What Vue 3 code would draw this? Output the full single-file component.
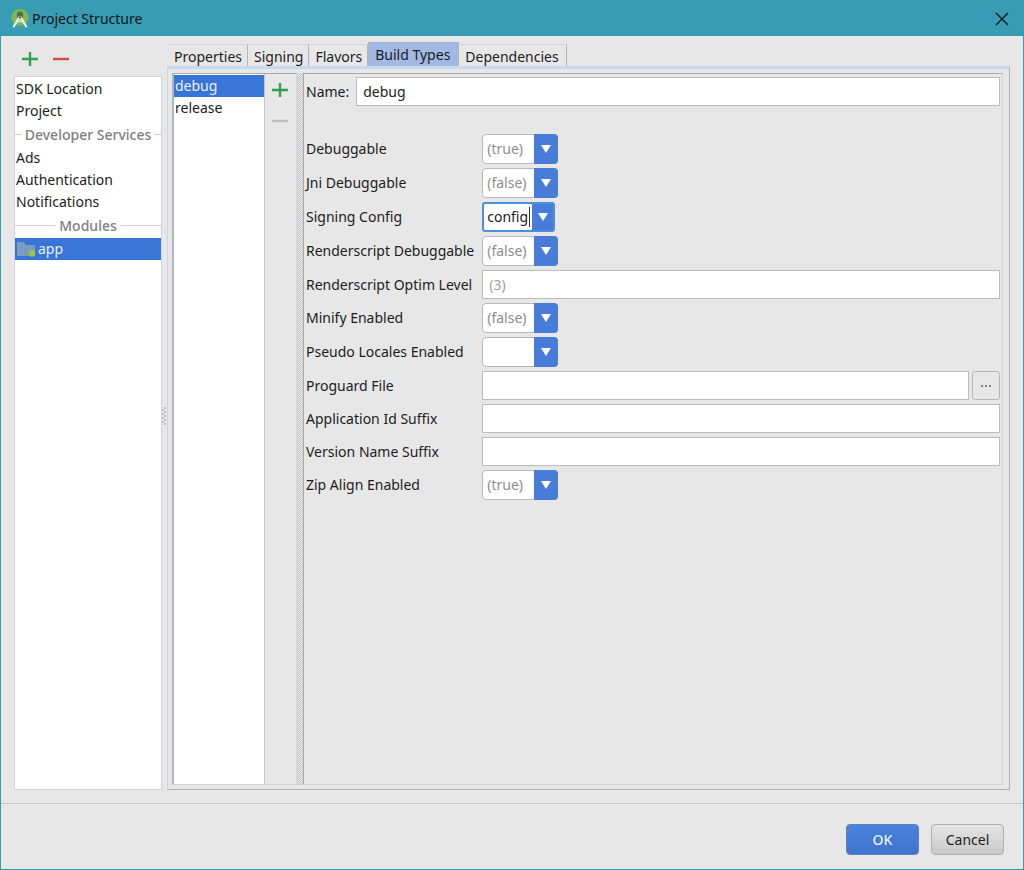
<script setup>
import { ref } from 'vue'

const sections = [
  { kind: 'item', text: 'SDK Location' },
  { kind: 'item', text: 'Project' },
  { kind: 'heading', text: 'Developer Services' },
  { kind: 'item', text: 'Ads' },
  { kind: 'item', text: 'Authentication' },
  { kind: 'item', text: 'Notifications' },
  { kind: 'heading', text: 'Modules' },
  { kind: 'module', text: 'app' },
]
const selectedSection = ref('app')

const tabs = ['Properties', 'Signing', 'Flavors', 'Build Types', 'Dependencies']
const activeTab = ref('Build Types')

const buildTypes = ['debug', 'release']
const selectedType = ref('debug')
const name = ref('debug')

const rows = ref([
  { id: 'debuggable', label: 'Debuggable', kind: 'select', value: '(true)' },
  { id: 'jni', label: 'Jni Debuggable', kind: 'select', value: '(false)' },
  { id: 'signing', label: 'Signing Config', kind: 'combo', value: 'config' },
  { id: 'rs-debug', label: 'Renderscript Debuggable', kind: 'select', value: '(false)' },
  { id: 'rs-optim', label: 'Renderscript Optim Level', kind: 'text', value: '', hint: '(3)' },
  { id: 'minify', label: 'Minify Enabled', kind: 'select', value: '(false)' },
  { id: 'pseudo', label: 'Pseudo Locales Enabled', kind: 'select', value: '' },
  { id: 'proguard', label: 'Proguard File', kind: 'file', value: '' },
  { id: 'app-suffix', label: 'Application Id Suffix', kind: 'text', value: '' },
  { id: 'version-suffix', label: 'Version Name Suffix', kind: 'text', value: '' },
  { id: 'zip', label: 'Zip Align Enabled', kind: 'select', value: '(true)' },
])
</script>

<template>
  <div class="window">
    <header class="titlebar">
      <svg class="logo" viewBox="0 0 18 20" aria-hidden="true">
        <circle cx="9" cy="8.500" r="8.500" fill="#7fb84c" />
        <path d="M9 2.500c-2 0-3.200 1.500-3.200 3.500s1 3.500 3.200 3.500 3.200-1.500 3.200-3.500S11 2.500 9 2.500z" fill="#4f6a50" />
        <path d="M7.500 9.500 2.800 17.500M10.500 9.500l4.700 8" fill="none" stroke="#eef4ee" stroke-width="2" stroke-linecap="round" />
        <path d="M5 13.500q4-2.500 8 0" fill="none" stroke="#dfeadb" stroke-width="1.500" />
        <circle cx="9" cy="9" r="2" fill="#e3ebe2" />
        <circle cx="9" cy="8.500" r="1.200" fill="#566b57" />
      </svg>
      <h1>Project Structure</h1>
      <button class="close" aria-label="Close">
        <svg viewBox="0 0 14 14"><path d="M1 1l12 12M13 1 1 13" stroke="#0b1a1e" stroke-width="1.400" fill="none" /></svg>
      </button>
    </header>

    <main class="content">
      <aside class="side">
        <div class="side-tools">
          <button class="tool" aria-label="Add module">
            <svg viewBox="0 0 16 16"><path d="M8 1v14M0 8h16" stroke="#2fa24f" stroke-width="2.400" /></svg>
          </button>
          <button class="tool" aria-label="Remove module">
            <svg viewBox="0 0 16 16"><path d="M0 8h16" stroke="#cb5044" stroke-width="2.400" /></svg>
          </button>
        </div>
        <ul class="side-list">
          <li v-for="s in sections" :key="s.text">
            <span v-if="s.kind === 'heading'" class="heading">{{ s.text }}</span>
            <button v-else class="item" :class="{ selected: selectedSection === s.text }" @click="selectedSection = s.text">
              <svg v-if="s.kind === 'module'" class="folder" viewBox="0 0 19 16" aria-hidden="true">
                <path d="M0 1h7l2 3h9v11H0z" fill="#7d9abf" />
                <circle cx="15" cy="12.500" r="3.200" fill="#a4c639" />
              </svg>
              {{ s.text }}
            </button>
          </li>
        </ul>
      </aside>

      <div class="grip"><span></span></div>

      <section class="editor">
        <nav class="tabs" role="tablist">
          <button v-for="t in tabs" :key="t" role="tab" class="tab" :class="{ active: activeTab === t }"
            :aria-selected="activeTab === t" @click="activeTab = t">{{ t }}</button>
        </nav>
        <div class="pane">
          <div class="types">
            <ul class="type-list">
              <li v-for="b in buildTypes" :key="b">
                <button class="type" :class="{ selected: selectedType === b }" @click="selectedType = b">{{ b }}</button>
              </li>
            </ul>
            <div class="type-tools">
              <button class="tool" aria-label="Add build type">
                <svg viewBox="0 0 16 16"><path d="M8 1v14M0 8h16" stroke="#2fa24f" stroke-width="2.400" /></svg>
              </button>
              <button class="tool" aria-label="Remove build type" disabled>
                <svg viewBox="0 0 16 16"><path d="M0 8h16" stroke="#bcbcbc" stroke-width="2.400" /></svg>
              </button>
            </div>
          </div>
          <div class="divider"></div>
          <form class="form" @submit.prevent>
            <div class="name-row">
              <label for="name">Name:</label>
              <input id="name" v-model="name" class="text" type="text" />
            </div>
            <div class="rows">
              <template v-for="r in rows" :key="r.id">
                <label :for="r.id">{{ r.label }}</label>
                <div v-if="r.kind === 'select'" class="drop">
                  <select :id="r.id" v-model="r.value">
                    <option value=""></option>
                    <option>(true)</option>
                    <option>(false)</option>
                  </select>
                  <span class="arrow"><svg viewBox="0 0 10 8"><path d="M0 0h10L5 8z" fill="#fff" /></svg></span>
                </div>
                <div v-else-if="r.kind === 'combo'" class="drop focused">
                  <input :id="r.id" v-model="r.value" type="text" role="combobox" aria-expanded="false" />
                  <span class="caret"></span>
                  <button class="arrow" type="button" aria-label="Show signing configs">
                    <svg viewBox="0 0 10 8"><path d="M0 0h10L5 8z" fill="#fff" /></svg>
                  </button>
                </div>
                <div v-else class="field">
                  <input :id="r.id" v-model="r.value" class="text" type="text" :placeholder="r.hint" />
                  <button v-if="r.kind === 'file'" class="browse" type="button" aria-label="Browse">
                    <i></i><i></i><i></i>
                  </button>
                </div>
              </template>
            </div>
          </form>
        </div>
      </section>
    </main>

    <footer class="footer">
      <button class="action primary">OK</button>
      <button class="action">Cancel</button>
    </footer>
  </div>
</template>

<style>
body {
  background: #e7e7e7;
}
</style>

<style scoped>
* {
  box-sizing: border-box;
}
.window {
  display: flex;
  flex-direction: column;
  min-height: 100vh;
  border: 1px solid #389cb4;
  background: #e7e7e7;
  color: #1c1c1c;
  font: 14px/22px "Noto Sans", "Open Sans", sans-serif;
}
button,
input,
select {
  margin: 0;
  padding: 0;
  border: 0;
  border-radius: 0;
  background: none;
  color: inherit;
  font: inherit;
  outline: none;
}
svg {
  display: block;
}
ul {
  margin: 0;
  padding: 0;
  list-style: none;
}
.titlebar {
  display: flex;
  align-items: center;
  height: 35px;
  padding: 0 14px 0 10px;
  background: #389cb4;
  color: #06171b;
}
.logo {
  width: 18px;
  height: 20px;
}
h1 {
  flex: 1;
  margin: 0 0 0 3px;
  font-size: 14px;
  font-weight: 400;
}
.close svg {
  width: 14px;
  height: 14px;
}
.content {
  display: flex;
  flex: 1;
  padding: 6px 13px 13px;
}
.side {
  display: flex;
  flex-direction: column;
  width: 148px;
}
.side-tools {
  display: flex;
  gap: 15px;
  height: 34px;
  padding: 9px 8px;
}
.tool svg {
  width: 16px;
  height: 16px;
}
.side-list {
  flex: 1;
  padding-top: 1px;
  border: 1px solid #d4d4d4;
  background: #fff;
}
.item {
  display: flex;
  align-items: center;
  width: 100%;
  height: 22px;
  padding-left: 1px;
}
.folder {
  width: 19px;
  height: 16px;
  margin: 0 2px 0 1px;
}
.selected {
  background: #3875d7;
  color: #e9f0fb;
}
.heading {
  display: flex;
  align-items: center;
  gap: 3px;
  height: 25px;
  color: #808080;
  font-weight: 500;
}
.heading::before,
.heading::after {
  content: "";
  flex: 1;
  border-top: 1px solid #d0d0d0;
}
.grip {
  display: flex;
  align-items: center;
  width: 5px;
}
.grip span {
  width: 4px;
  height: 18px;
  background: repeating-conic-gradient(#c4c4c4 0 25%, #e7e7e7 0 50%) 0 0 / 4px 4px;
}
.editor {
  display: flex;
  flex: 1;
  flex-direction: column;
  min-width: 0;
}
.tabs {
  display: flex;
  align-items: flex-end;
  height: 24px;
}
.tab {
  height: 22px;
  padding: 1px 5px 0 6px;
  border-top: 1px solid #d6d6d6;
  border-right: 1px solid #b4b4b4;
}
.tab:first-child {
  padding-left: 7px;
}
.tab:last-child {
  padding-right: 7px;
}
.tab.active {
  height: 24px;
  padding: 1px 8px 1px 7px;
  border-top-color: #9db3da;
  background: #a1b9e3;
}
.pane {
  display: flex;
  flex: 1;
  padding: 4px 6px 4px 4px;
  border: 1px solid #b0b0b0;
  border-top: 3px solid #c8daf2;
  border-left-color: #ccd6df;
}
.types {
  display: flex;
  width: 125px;
  border: 1px solid #d4d4d4;
  border-top-color: #a3a9b2;
  border-left: 2px solid #adb4bd;
}
.type-list {
  width: 91px;
  padding-top: 1px;
  border-right: 1px solid #c4c4c4;
  background: #fff;
}
.type {
  display: block;
  width: 100%;
  height: 22px;
  padding-left: 1px;
  text-align: left;
}
.type-tools {
  display: flex;
  flex: 1;
  flex-direction: column;
  align-items: center;
  gap: 15px;
  padding: 8px 1px 0 0;
}
.divider {
  width: 6px;
  background: repeating-conic-gradient(#cacaca 0 25%, #e2e2e2 0 50%) 0 0 / 2px 2px;
}
.form {
  flex: 1;
  min-width: 0;
  padding: 3px 2px;
  border: 1px solid #d4d4d4;
  border-top-color: #a3a9b2;
  border-left-color: #a3a9b2;
}
.name-row {
  display: flex;
  align-items: center;
  gap: 7px;
}
.text {
  flex: 1;
  min-width: 0;
  height: 29px;
  padding: 0 6px;
  border: 1px solid #bcbcbc;
  background: #fff;
}
.text::placeholder {
  color: #a0a0a0;
  opacity: 1;
}
.rows {
  display: grid;
  grid-template-columns: auto 1fr;
  align-items: center;
  gap: 4px 8px;
  margin-top: 28px;
}
.drop {
  position: relative;
  display: flex;
  width: 76px;
  height: 30px;
}
.drop select {
  width: 76px;
  padding: 0 24px 0 4px;
  border: 1px solid #b9b9b9;
  border-radius: 4px;
  background: #fff;
  color: #8c8c8c;
  appearance: none;
}
.arrow {
  display: flex;
  align-items: center;
  justify-content: center;
  width: 24px;
  border-radius: 0 4px 4px 0;
  background: #477cd8;
}
.drop select + .arrow {
  position: absolute;
  top: 0;
  right: 0;
  bottom: 0;
  pointer-events: none;
}
.arrow svg {
  width: 10px;
  height: 8px;
}
.drop.focused {
  width: 73px;
  border: 2px solid #4a90dc;
  border-radius: 3px;
  background: #fff;
}
.drop.focused input {
  flex: 1;
  min-width: 0;
  padding-left: 3px;
}
.drop.focused .arrow {
  width: 21px;
  border-radius: 0;
}
.caret {
  width: 1px;
  height: 20px;
  margin: 3px 2px 0 0;
  background: #333;
}
.field {
  display: flex;
  gap: 3px;
}
.browse {
  display: flex;
  align-items: center;
  justify-content: center;
  gap: 2px;
  width: 28px;
  height: 29px;
  border: 1px solid #b6b6b6;
  border-radius: 3px;
}
.browse i {
  width: 2px;
  height: 2px;
  background: #808080;
}
.footer {
  display: flex;
  justify-content: flex-end;
  gap: 12px;
  height: 66px;
  padding: 20px 19px 15px;
  border-top: 1px solid #c4c4c4;
}
.action {
  width: 73px;
  height: 31px;
  border: 1px solid #b0b0b0;
  border-radius: 4px;
  background: linear-gradient(#e4e4e4, #c9c9c9);
}
.action.primary {
  border-color: #5f82bd;
  background: linear-gradient(#4a82df, #4074cd);
  color: #e9f0fb;
  font-weight: 500;
}
</style>
